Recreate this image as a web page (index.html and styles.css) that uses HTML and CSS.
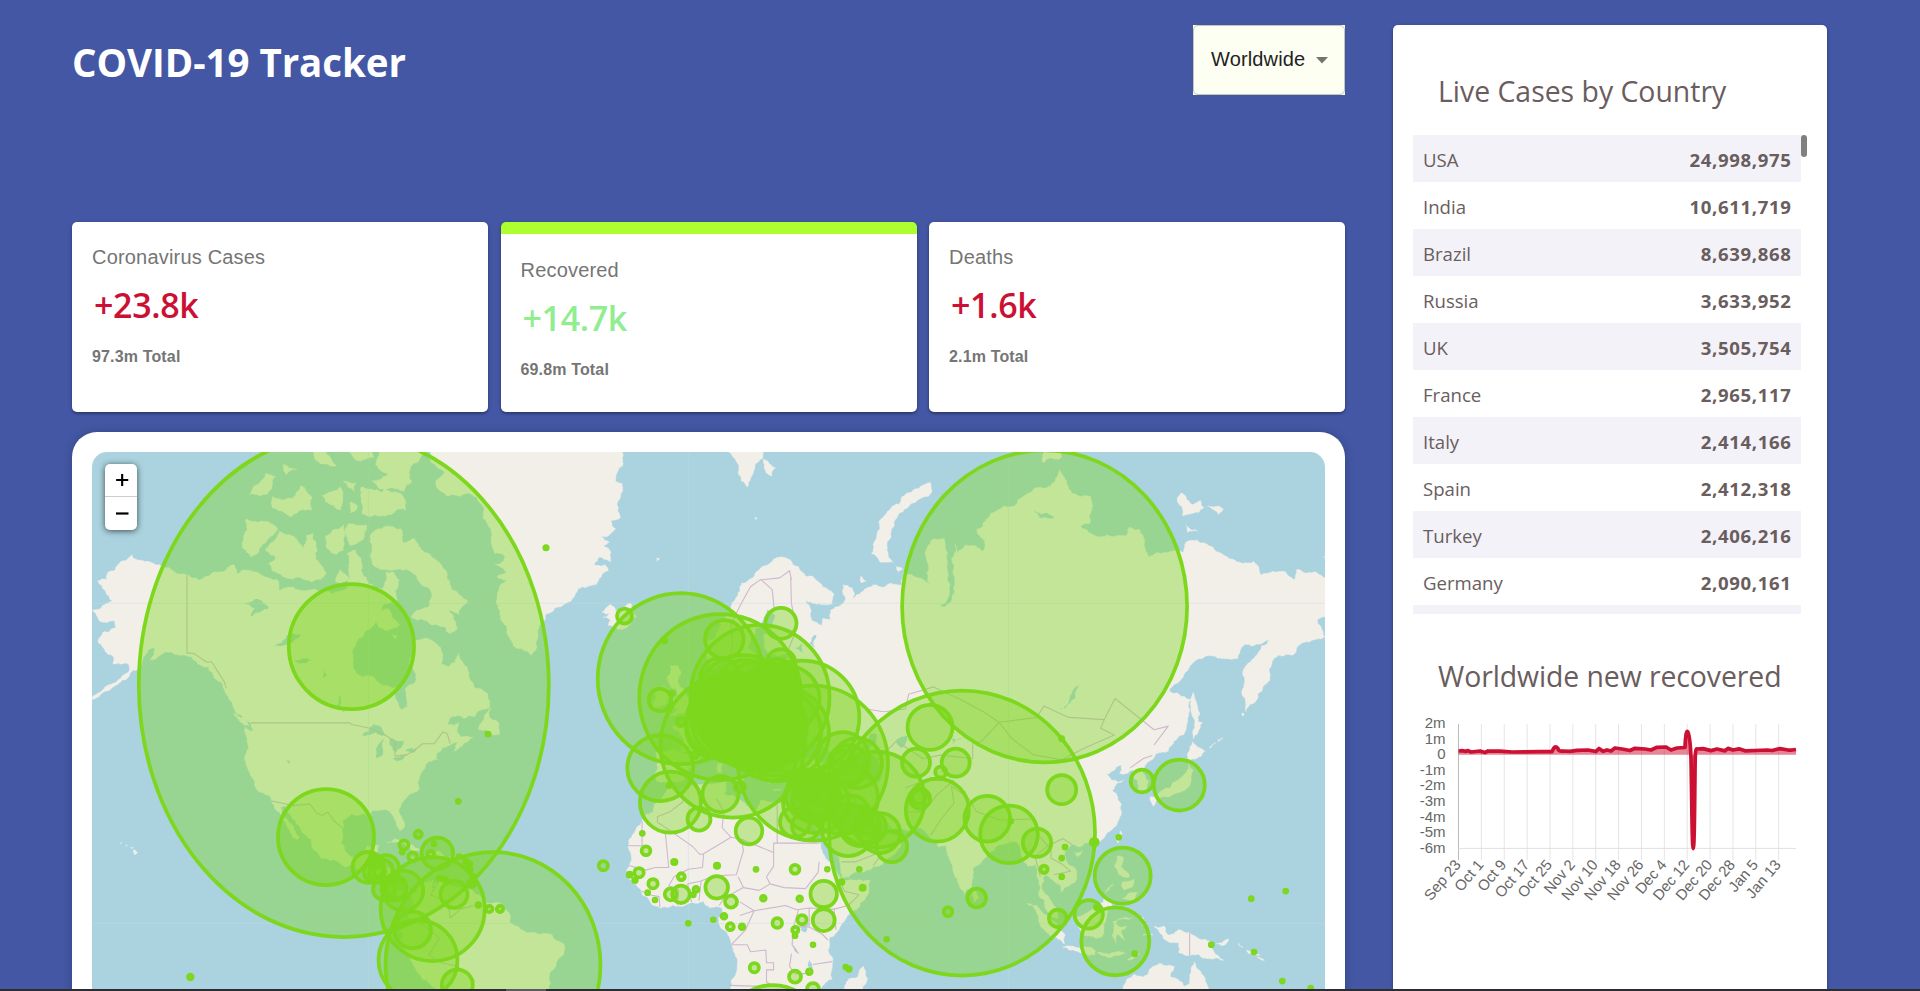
FILE: index.html
```html
<!DOCTYPE html>
<html lang="en">
<head>
<meta charset="utf-8">
<title>COVID-19 Tracker</title>
<link rel="stylesheet" href="styles.css">
</head>
<body>
<div class="app">
  <main class="app-left">
    <header class="app-header">
      <h1>COVID-19 Tracker</h1>
      <div class="select"><span class="select-box"><span>Worldwide</span><svg width="12" height="7" viewBox="0 0 12 7"><path d="M0 0h12L6 6.5z" fill="#757570"/></svg></span></div>
    </header>
    <section class="stats">
      <article class="card stat"><p class="stat-title">Coronavirus Cases</p><p class="stat-new">+23.8k</p><p class="stat-total">97.3m Total</p></article>
      <article class="card stat stat-active"><p class="stat-title">Recovered</p><p class="stat-new good">+14.7k</p><p class="stat-total">69.8m Total</p></article>
      <article class="card stat"><p class="stat-title">Deaths</p><p class="stat-new">+1.6k</p><p class="stat-total">2.1m Total</p></article>
    </section>
    <section class="map-card">
      <div class="map">
        <svg id="map" width="1233" height="600" viewBox="92 452 1233 600"></svg>
        <div class="zoom">
          <svg width="32" height="33" viewBox="0 0 32 33"><path d="M11 16.5h12.5M17.2 10.2v12.6" stroke="#000" stroke-width="2.2"/></svg>
          <svg width="32" height="33" viewBox="0 0 32 33"><path d="M11 16.5h12.5" stroke="#000" stroke-width="2.2"/></svg>
        </div>
      </div>
    </section>
  </main>
  <aside class="card app-right">
    <h2>Live Cases by Country</h2>
    <div class="table-wrap">
      <div class="table">
        <div class="row"><span>USA</span><b>24,998,975</b></div>
        <div class="row"><span>India</span><b>10,611,719</b></div>
        <div class="row"><span>Brazil</span><b>8,639,868</b></div>
        <div class="row"><span>Russia</span><b>3,633,952</b></div>
        <div class="row"><span>UK</span><b>3,505,754</b></div>
        <div class="row"><span>France</span><b>2,965,117</b></div>
        <div class="row"><span>Italy</span><b>2,414,166</b></div>
        <div class="row"><span>Spain</span><b>2,412,318</b></div>
        <div class="row"><span>Turkey</span><b>2,406,216</b></div>
        <div class="row"><span>Germany</span><b>2,090,161</b></div>
        <div class="row"></div>
      </div>
      <div class="thumb"></div>
    </div>
    <h2 class="graph-title">Worldwide new recovered</h2>
    <svg id="chart" width="394" height="200" viewBox="1413 710 394 200"></svg>
  </aside>
</div>
<div class="taskbar"><i></i></div>
<script src="map.js"></script>
</body>
</html>
```
FILE: styles.css
```css
* { box-sizing: border-box; margin: 0; }
body { background: #4357a4; font-family: "Open Sans", "Noto Sans", sans-serif; height: 991px; overflow: hidden; }
.app { display: flex; gap: 48px; padding: 25px 93px 0 72px; height: 991px; overflow: hidden; }
.app-left { width: 1273px; flex: none; }
.app-header { display: flex; justify-content: space-between; height: 197px; }
h1 { color: #fff; font-size: 38.5px; line-height: 74px; font-weight: 700; letter-spacing: -0.05px; }
.select { width: 152px; height: 70px; background: #fdfff2; }
.select-box { display: flex; align-items: center; justify-content: space-between; height: 70px; padding: 0 16px 1px 17px; border: 1px solid #c3c5b7; border-radius: 5px; font: 20px "Liberation Sans", Arial, sans-serif; letter-spacing: .15px; color: #222; }
.select-box svg { margin-top: 2px; }
.card { background: #fff; border-radius: 5px; box-shadow: 0 2px 2px rgba(0,0,0,.2), 0 1px 4px rgba(0,0,0,.2); }
.stats { display: grid; grid-template-columns: repeat(3, 1fr); gap: 12.5px; }
.stat { height: 190px; padding: 20px; font-family: "Liberation Sans", Arial, sans-serif; color: #757575; }
.stat-active { border-top: 12.5px solid #adff2f; padding-top: 20.5px; }
.stat-title { font-size: 20px; line-height: 30px; letter-spacing: .19px; }
.stat-new { font: 600 34px/44px "Open Sans", sans-serif; color: #cc1034; margin-top: 11px; padding-left: 2px; letter-spacing: -.35px; }
.good { color: #90ee90; }
.stat-total { font-size: 16px; font-weight: 700; line-height: 22px; margin-top: 19px; letter-spacing: .15px; }
.map-card { margin-top: 20px; background: #fff; border-radius: 25px; padding: 20px; height: 640px; box-shadow: 0 0 10px rgba(0,0,0,.2); }
.map { position: relative; height: 600px; border-radius: 15px; overflow: hidden; background: #aad3df; }
.map > svg { display: block; }
.zoom { position: absolute; left: 13px; top: 12px; width: 32px; height: 66px; border-radius: 5px; background: #fff; box-shadow: 0 1px 6px rgba(0,0,0,.65); display: flex; flex-direction: column; }
.zoom svg:first-child { border-bottom: 1px solid #ccc; }
.app-right { width: 434px; flex: none; height: 1100px; padding: 43px 20px 0; color: #6a5d5d; }
h2 { font-size: 28.4px; font-weight: 400; line-height: 46px; padding-left: 25px; white-space: nowrap; }
.table-wrap { display: flex; margin-top: 21px; height: 479px; overflow: hidden; }
.table { width: 388px; }
.row { height: 47px; display: flex; justify-content: space-between; align-items: center; padding: 1px 10px 0; font-size: 18.6px; }
.row:nth-child(odd) { background: #f3f2f8; }
.row b { font-weight: 700; letter-spacing: .65px; margin-right: -.65px; }
.thumb { width: 6px; height: 22px; border-radius: 4px; background: #808080; }
.graph-title { margin-top: 39px; letter-spacing: -.08px; }
#chart { display: block; margin-top: 11px; font: 15px "Liberation Sans", Arial, sans-serif; }
.taskbar { position: fixed; left: 0; right: 0; bottom: 0; height: 2px; background: #2b2d33; }
.taskbar i { display: block; width: 40px; height: 2px; margin-left: 506px; background: #5c5c60; }
```
FILE: map.js
```js
// Web Mercator projection of "lon,lat lon,lat ..." strings
const px = lon => 688.3 + lon * 3.5556;
const py = lat => 923.3 - 203.72 * Math.log(Math.tan(Math.PI / 4 + lat * Math.PI / 360));
const project = s => s.trim().split(/\s+/).map(p => {
  const [a, b] = p.split(',').map(Number);
  return [px(a), py(b)];
});
const toPath = pts => 'M' + pts.map(p => p[0].toFixed(1) + ' ' + p[1].toFixed(1)).join('L');

// Midpoint displacement gives coastlines their small irregularities
let seed = 11;
const rnd = () => (seed = (seed * 16807) % 2147483647) / 2147483647 - .5;
function rough(a, b, out) {
  const dx = b[0] - a[0], dy = b[1] - a[1], len = Math.hypot(dx, dy);
  if (len < 2.5) { out.push(b); return; }
  const k = rnd() * (len > 40 ? .08 : .34);
  const m = [a[0] + dx / 2 - dy * k, a[1] + dy / 2 + dx * k];
  rough(a, m, out);
  rough(m, b, out);
}
const coast = s => {
  const pts = project(s), out = [];
  pts.forEach((p, i) => rough(p, pts[(i + 1) % pts.length], out));
  return toPath(out) + 'Z';
};

const land = [
// Americas
`-141,69.6 -146,70.2 -149,70.5 -152,70.8 -154,70.9 -156.6,71.4 -158,70.9 -160,70.6 -163,69.8 -163.5,69.1 -166.2,68.9 -164,67.9 -162,66.8 -163.8,66.5 -167.7,65.7 -166,64.7 -161.5,64.5 -161,63.6 -164.5,63.1 -166,61.7 -164,60.5 -162,59.9 -161.8,58.7 -159,58.8 -157.5,58.7 -157.2,57.7 -161,55.9 -164.8,54.7 -168,53.2 -164,54.5 -162,55.1 -158,56.4 -155,57.9 -153.5,59.2 -151.8,60.8 -150,61.1 -151.5,59.3 -148.5,60 -145.5,60.4 -142,60 -139.5,59.6 -137,58.5 -135,58.3 -133.5,57 -131,55.5 -130,54 -128,52 -127.5,51 -124.8,49.8 -123,49 -122.5,47.5 -124.7,48.3 -124,46 -124.4,43 -124.2,40.5 -122.5,37.7 -120.6,34.6 -118.3,33.9 -117.1,32.5 -115.9,30.3 -114.2,28 -113,26.6 -112,24.8 -110,22.9 -109.5,23.4 -111,25.5 -112.7,28 -114.7,31 -113,31.2 -111,28 -109,25.8 -106,23 -105.5,20.5 -104,19 -101,17.5 -97,15.9 -94.5,16.2 -92,14.5 -89,13.3 -87.5,12.9 -85.8,11 -85.6,9.9 -83.6,8.8 -82.8,8.2 -80.5,7.4 -79.5,8.9 -78.2,8.3 -77.5,7.2 -77.3,4 -78.8,1.5 -80,.5 -80.9,-1.5 -80,-3.2 -81.3,-4.7 -79.8,-7 -78,-10.5 -76.2,-13.8 -73,-16.5 -70.3,-18.4 -70,-24 -48.5,-26 -46,-24 -41.5,-22 -39.5,-18.5 -39,-14 -37.2,-11.2 -35,-8.5 -35,-5.8 -37,-4.8 -40,-2.9 -44,-2.6 -48,-.8 -50,0 -50,1.8 -51.6,4.2 -54,5.9 -57.2,6 -60,8.3 -62,9.8 -62,10.7 -65,10.1 -68,10.6 -70,12.1 -71.5,10.8 -71,9.5 -72,9.8 -71.8,12 -74.8,11 -75.6,10.4 -76.8,8.2 -77.5,8.6 -79.5,9.6 -81.5,8.9 -83.3,10.2 -83.6,12.5 -83.2,15 -85.5,15.9 -88.5,15.9 -88.2,18 -87.4,20 -87,21.5 -90.3,21.2 -90.8,19.3 -92,18.6 -94.5,18.2 -96.3,19.5 -97.7,22 -97.4,25.5 -97.2,27.7 -94.7,29.4 -91.5,29.5 -89.3,29.1 -89,30.3 -86,30.4 -84,30 -82.8,28.5 -82,26.5 -81.1,25.2 -80.2,25.7 -80.5,28.2 -81.4,30.5 -79.5,33 -77.5,34.3 -75.7,35.3 -76,37 -74,40 -73.8,40.8 -70.5,41.7 -70.8,43 -67,44.7 -64.8,45.4 -66,43.6 -63.5,44.6 -60.5,46.3 -64,46.3 -65,48 -64.5,49 -68,48.6 -70.5,47 -66.5,50.2 -60,50.2 -56,51.7 -56,53 -58,54.8 -60,55 -61.5,56.5 -62,58 -64.5,60.3 -65.5,59 -67.5,58.3 -69.5,58.8 -69.6,61 -73.5,62.3 -78,62.4 -77.5,60 -78.5,58.7 -76.6,57 -77,55.8 -79.6,54.8 -79,52 -80.5,51.3 -82.2,53 -82.3,55.1 -87.5,56.1 -92.5,57 -94.3,58.8 -94.5,60.5 -93,62 -90.5,63.3 -88,64.2 -87,65.3 -85.8,66.4 -82,66.7 -81.3,69 -83,69.8 -85,69.8 -86,68 -88,68.2 -90.5,69.2 -92,70 -92,71 -93.5,71.8 -96,71.5 -95.5,69.8 -96,68.2 -98,67.8 -102,67.8 -108,67.9 -110,68 -115,67.9 -115.5,69 -118,69.2 -120,69.5 -122,69.8 -125,70 -127,69.6 -128,70.5 -131,69.8 -135,69.4 -137.5,69`,
// Vancouver, Newfoundland, Caribbean
`-128,50.8 -125,50 -123.5,48.5 -126,49.2`, `-59,47.7 -57.5,50.3 -55.5,51.6 -56,50 -53.5,49.2 -53,46.8 -55.5,47`,
`-84.9,21.9 -82.5,23.1 -79,22.6 -74.3,20.3 -77.5,19.9 -78.5,21 -82,22.3`, `-74.4,18.5 -72.8,19.9 -69.8,19.8 -68.5,18.6 -71.5,17.8`, `-78.3,18.4 -76.3,18.1 -77.5,17.8`, `-67.2,18.4 -65.7,18.3 -67,18`,
`-156.1,20.2 -154.9,19.5 -155.7,18.9`, `-157,21 -156,20.8 -156.5,20.6`, `-158.2,21.6 -157.7,21.3 -158.1,21.3`, `-159.8,22.1 -159.3,22 -159.6,21.9`,
// Arctic archipelago
`-117,69.9 -113,69.2 -106,68.8 -101.8,69.7 -105,71.5 -105.5,73.2 -107.5,73 -108.3,71.8 -110,72.7 -111,73 -115,73.4 -119,71.8 -116,71.2 -118,70.6`,
`-125.5,72 -123,71.2 -120.5,72 -117,73 -115.5,73.5 -120,74.2 -124.5,74.3 -124,73.5`,
`-102,73 -97,73.9 -97,71.8 -99,71.4 -102,72.2`, `-95.5,74 -90.5,73.9 -91.5,72.7 -95,72.2`, `-98,70 -95.5,69 -99,68.8`,
`-89.5,73 -85,73.8 -81,73.6 -80.5,72.5 -77,72.8 -74,71.6 -70,70.7 -68,69.8 -67,68.7 -64.5,67.5 -62,66.7 -64.5,65.2 -67.5,65.7 -65,63.5 -67,62.9 -71,64 -74,64.5 -78,65 -73.5,66 -73,68.2 -76,69 -79,70 -83,70 -88.5,70.4 -89.5,71.3`,
`-87,65.5 -84,65.8 -81,64 -85,63.2 -87,63.7`, `-83.5,62.8 -82,62.6 -82.5,62.2`,
`-92,76.6 -88,76.4 -81,76.2 -79.5,75 -85,74.6 -91.5,74.7 -92,75.8`,
`-92,81 -90,79.5 -86,79 -88,78 -84.5,77.4 -89,77 -87,76.5 -80,76.3 -77.8,77 -78,77.9 -75,78.5 -72,81 -80,82`,
`-96,80 -96,79 -92,78.2 -88.5,78.4 -89,80`, `-104.5,79.2 -99,77.9 -105,78.3`, `-103,76 -98,76.6 -97.7,75 -102,75.6`, `-117,76 -111,75.9 -109,76.7 -105.8,75.9 -106,75 -112,74.5 -117,75.2`, `-123.5,76.1 -119,77.4 -116,77.3 -117.5,76.4`, `-114,78 -110,77.7 -113,77.4`, `-97,77 -93.5,76.9 -94,76.3`, `-95,75.6 -93,75.3 -95,74.8`,
// Greenland, Iceland, Svalbard
`-73,79 -72.5,78.2 -68.5,77.5 -71,77 -68,76 -62,76.2 -58,75.4 -55.5,73.5 -54.5,71.5 -51.5,71.2 -54.5,70.5 -51.2,69.8 -53.8,69.3 -51,69 -53.5,67.8 -53.5,66 -52,64.2 -50.5,62.5 -48.5,61 -44,60 -42.6,61 -42.3,62.8 -40.5,64.5 -40,65.3 -37.5,66 -34.5,66.5 -31,68.1 -26,68.5 -22.5,69.9 -23.5,70.5 -26.5,70.5 -25,71.2 -22,70.7 -21.8,71.6 -24,72.2 -22.2,72.5 -24.5,73 -20.5,73.6 -21.8,74.2 -19,74.5 -20,75.5 -18.5,76.8 -20.5,77 -18.5,77.9 -19.5,79 -20,81 -73,81`,
`-24.3,65.5 -22,66.4 -20.5,65.7 -18,66.1 -16.2,66.5 -14.6,65 -16.5,64 -18.8,63.4 -22.5,63.9 -21.8,64.5 -23.9,64.9 -22,65.3`,
`10.5,79.2 14,77.5 16.7,76.6 18.8,78 21,78.4 21,79.5 12,80`, `21,78.3 24.5,77.8 23.5,77.3 21.5,77.7`, `22,79.3 27,80 23,80.3`, `-9,71.1 -8,71 -8.8,70.8`, `18.8,74.5 19.3,74.4 19,74.3`,
// Novaya Zemlya and Siberian islands
`51.5,71.5 53,73 56.5,75 61,76.1 68,76.9 68.5,76.3 61,75.1 57,73.3 56,72 57.5,70.7 54,70.7`, `48.5,69.4 50,68.9 48.7,68.7`, `58.5,70.3 60.4,70 59,69.8`,
`95.3,79 100,79.2 99.8,78.1 105,78.4 104.5,79.2 98,80.2`, `137.5,75.8 139,76.2 142,75.4 144,75.7 145,75.2 142,74.8 139,74.6`, `146,75.3 150.5,75.1 149,74.7`, `140,73.9 143.3,73.4 140.5,73.3`, `178.7,71.2 180,71.5 180,70.9`,
// Britain and Ireland
`-5.5,50.1 -3,51.4 -5,51.8 -4.3,53.2 -3,53.8 -3.3,54.8 -5,55.3 -6,56.7 -5,58.5 -3,58.5 -2,57.5 -3,56 -1.5,55 0,53.5 1.7,52.7 1,51.2 -1.5,50.7 -3.6,50.3`, `-10,51.7 -9.5,54.2 -7.4,55.3 -5.6,54.5 -6.2,52.3`,
// Eurasia
`-5.6,36 -6.4,37 -8.9,37 -9.4,38.8 -8.7,41 -9.2,43.1 -5,43.6 -1.8,43.4 -1.2,45.5 -2.5,47.3 -4.6,48.2 -1.5,48.7 -1.8,49.7 .2,49.6 1.6,50.6 4,51.7 5,53.2 8.3,53.8 8.7,55.5 8.2,57 10.6,57.7 10.2,56 10,54.7 11,54 14,54 18.5,54.7 19.8,54.5 21.1,55.5 21.2,57 24,57.1 24.3,58.3 23.5,59.2 28,59.6 30,60 28,60.5 23,59.9 21.4,61 21.3,62.8 24.5,65 22.3,65.8 21,64.5 17.5,62 17.2,60.7 18.8,59.7 16.5,57.5 15.8,56.2 14.2,55.4 12.9,55.5 12,57.5 11,59 10.4,59.2 7.5,58 5.5,59 5,61.5 8.5,63.3 12,65.5 13,66.8 14.5,67.8 15,68.7 17,69 20,70 22,70.4 24,71 28,71 31,70.3 33,69.4 37,68.7 41,67.5 40.5,66.4 36,66.4 33,66.8 34.8,64.5 37.5,63.9 38,64.8 40,64.7 40,65.7 43,66.3 44.2,66.9 43.5,68.5 46,68.2 46.5,66.9 49,67.8 52,68.5 54,68.3 57,68.7 60,68.5 60.5,69.7 65,69.2 68.5,68.3 67,69.7 67,71 69,72.8 72,72.8 72.7,71 73.2,69.5 73.5,68.3 72,66.5 69.5,66.3 72,66.1 74.5,67.5 75,69 74,71 75,72.4 75.5,71.5 78,72.3 83,71.7 81,73.5 87,75 95,76.1 100,76.5 104.5,77.7 107,76.5 113,76 113,74 109,73.4 106,73 110,73.8 118,73.1 123,73 124,73.7 127,73.5 129.5,71.2 133,71.5 135,71.6 139,71.6 140,72.5 146,72.3 150,71.5 153,71 159,70.8 161,69.5 168,69.8 170.5,69 171,70 176,69.8 180,69 180,65 177,64.7 179,62.5 174,61.8 170,60 166,60 163.3,58 163,56 161.5,54.8 159.8,53 156.8,51 155.7,54 156,57 160,60 163.5,62 160,61.5 156.5,61.5 154.5,59.5 150,59.5 142.5,59.2 138,56 135.3,54.7 138,54 141.2,53 140.5,50 140,48 137.5,46 135,43.5 131.5,43 129.8,41.5 127.5,39.7 129.4,37 129,35.2 126.4,34.5 126.5,37.2 125,38 125,39.6 121.3,38.8 122,40.5 119,39.2 117.7,38.6 119,37.3 122.4,37.3 119.3,35 121.8,31.7 121.8,29.5 119.5,25.8 116.5,23 113,22 110,21 108,21.6 106,20 105.8,18.8 108.5,15.5 109.3,12.3 107,10.4 105,8.7 104.8,10.3 102.5,12 100.8,13.4 100,13.3 99.3,10.5 100.3,8.3 102,6.3 103.4,4 104,1.4 103.3,1.5 100.6,4 100.3,6.3 98.5,8.2 98.6,12 97.6,16.4 95.5,15.8 94.3,17 93.5,20 91.8,22.5 89,21.8 87,21.3 85,19.7 82.3,16.7 80.2,15.5 80.2,13 79.8,10.4 77.6,8.1 76.3,10 74.5,14.5 72.8,19 72.6,21.3 70.5,20.9 69,22.3 70,22.8 67.5,24 66.5,25.3 61.5,25.2 57.3,25.7 56.3,27.1 54,26.6 51.5,27.9 50,30.1 48,30 48.5,28.2 50.2,26.5 50.8,24.8 51.3,26 51.6,24.3 54,24.2 56.2,26.2 56.5,24.5 59.8,22.4 57.8,19 55,17 52,15.6 45,12.8 43.4,12.7 42.8,16 39.1,21.3 37,25 35,28 34.9,29.4 34.3,27.8 32.6,29.9 32.5,31.2 34.3,31.4 35,33 35.8,35.5 36,36.7 32.5,36.1 30.6,36.7 28,36.7 26.3,38.2 26.2,40 29,41 31.5,41.3 35,42 38,41 41.5,41.5 39,43.8 37,45.2 39.2,47.2 35,46.2 36.5,45.3 33.6,44.4 33,46 30.7,46.3 28.7,44 27.8,42.5 28.9,41.3 26,40.7 23.5,40.3 24,38 22.8,36.5 21.3,37.5 19.5,40.5 19.4,42 15,44.5 13.7,45.6 12.3,45.3 13.6,43.5 16,42 18.5,40.1 16.9,40.4 16.2,38 15.8,40 12.5,41.6 10.3,43.5 8.8,44.4 6.5,43.1 3.2,43.1 3.1,41.8 0,39.5 -.5,37.8 -2.2,36.8`,
`8.3,41 9.7,40.8 9.3,39 8.4,39`, `12.5,38 15.5,38.2 15,36.8`, `23.6,35.4 26.2,35.2 24,35`, `32.4,35 34.3,35.6 33.5,34.7`,
// Africa and Madagascar
`-5.9,35.8 -2,35.1 5,36.8 10.8,37.3 10.2,34.3 15,32.4 19,30.3 20.2,32.6 23.2,32.2 29,30.9 32.5,31.2 32.6,29.9 35.5,24 37.3,21 38.5,18 43,12.6 43.2,11.5 51.2,11.8 50.8,9.5 47.5,4 43,-.5 39.7,-4 39.3,-7.5 40.6,-11 40.5,-15.5 36,-18.8 35,-20 12,-20 12,-17.5 13.8,-11 12.3,-6 9,-1 9.6,3.9 8.5,4.6 6,4.3 4.3,6.3 1,5.9 -2,4.7 -4.5,5.2 -7.6,4.3 -11,6.5 -13,7.9 -13.3,9.3 -16.7,12.4 -17.4,14.7 -16.2,17 -16.2,19.5 -17,21 -14.5,26 -13,27.8 -9.8,30 -9.6,31.8 -6.8,34`,
`49.3,-12 50.4,-15.5 49,-19 44,-20 44.5,-16.2 47.5,-15`, `80,9.6 81.8,7.3 80.5,6 79.8,8`,
// East and South-East Asia
`142,54.3 143.2,52 143.3,49.2 144.6,49 143,46.8 142,46 142,50`, `141.8,45.4 145.3,43.6 143,42 140.2,41.6 140.5,43.2`, `140.8,41.4 142,39.5 140.9,36 139,34.8 135.7,33.6 131,33.9 135.5,35.5 137,37 139.5,38.5`, `130,33.5 131.8,33.4 130.8,31.2`, `121.5,25.2 121.9,24.7 120.8,22 120.1,23.2`, `108.7,19.6 110.9,19.9 109.5,18.3`,
`155.7,50.8 156.4,50.5 155.9,50.2`, `149,45.8 150.3,46.2 149,45.4`, `146.5,44.3 148.3,45.2 147,44.2`,
`120.5,18.5 122.2,18.3 121.5,15.8 124,13 121,13.8 119.9,16`, `122,7 124,8.5 126.3,8.6 125.7,6 124,6.5`, `122,11.5 125.3,12.3 125,10.2 122.5,9.3`, `117.2,8.4 119.5,11.2 119.3,10.4`,
`95.3,5.6 98,5 103.7,0 106,-3.2 105.8,-5.8 102,-4 98.5,1.5`, `105.3,-6.7 108.5,-6.6 111,-6.5 114.5,-7.7 114.4,-8.7 109,-7.8`, `109,1.5 111.3,2.5 115,5 117,7 119.2,5.2 117.6,1.5 116,-4 111.5,-3.5 110,-1.5`, `119.5,.5 121,1.2 125,1.5 120.3,.3 121.5,-1 123.4,-.8 121.8,-2 122.7,-4.7 120.7,-3 120.3,-5.6 119.2,-3.3`, `115,-8.2 119,-8.3 123,-8.4 120,-9 116,-8.9`, `123.5,-10.3 127,-8.5 125,-9.2`, `127.7,1.8 128.5,.5 127.8,-.8`, `128,-3 130.7,-3.3 128,-3.5`,
`131,-.8 134,-.9 135,-3.3 138,-1.7 141,-2.6 145.5,-4.5 147.8,-6.3 147.2,-7 150.7,-10.4 147.5,-10 143.5,-8.6 141,-9.1 138,-8.3 137.8,-5.3 133.5,-4 132.7,-2.8`, `148.5,-5.7 152,-4.4 150.5,-6.2`, `154.7,-5.5 156,-6.8 155,-6.4`, `157,-7.5 160.8,-9 159,-8.3`, `160,-9.4 162,-10.5 160.8,-10`,
`122,-20 122.3,-17.3 125.5,-14.2 128,-14.9 130.5,-12.2 132.5,-11.2 136.7,-12.1 135.6,-14.9 139.5,-17.5 141,-16.8 142.3,-10.8 145.2,-15 146.2,-19 149,-21 122,-21`
];

const lakes = [
`-92,46.7 -88.5,48.8 -84.7,46.6 -88,47.2`, `-87.8,42 -87.5,44.5 -85.5,46 -86.3,42.5`, `-84,46 -80,45.5 -82.3,43.2 -83.5,44.5`, `-83.2,42 -79,42.8 -81.5,41.5`, `-79.6,43.5 -76.3,44 -77,43.3`,
`-98,53.8 -96.5,50.5 -99,52`, `-125,66.5 -121,67 -119.5,66.5 -118,66 -120.5,65.5 -123,65 -122,65.9`, `-116.5,61 -113,62.6 -109,62.8 -112.5,61.5`, `-111,59.3 -106,59.3 -109,58.8`, `-103,58 -101.7,57 -102.5,56.6`, `-113,41.5 -112,40.8 -112.3,41.6`,
`47,44.5 50,44.6 51,47 53,46.8 53,45 51,44.3 50.3,44.4 53,42 54,40.8 53.8,37 50,37.3 49,40 47.5,43`, `58.5,45.8 61.5,46.5 60,44`, `74,46 79,46.6 74.5,44.8`, `104,51.5 107,52.6 109.8,55.6 108.7,53.3 106,51.6`, `30,61 32.8,60 32,61.5`, `34.2,61.5 36,62.7 35.5,61`,
`31.8,.3 34.2,.2 33,-2.6 31.8,-2`, `29.2,-3.5 31,-8.6 29.5,-6`, `34,-10 34.6,-14 34.2,-12.5`, `97,75 101,74.8 103,74.4 99,74.4`
];

const borders = [
'-141,69.6 -141,60.3 -139,60.2 -135.5,59 -134,59 -130.5,56 -130,55', '-123,49 -95.2,49 -94.6,48.7 -89.5,48 -84.5,46.4 -82.5,45.3 -82.5,42.5 -79,42.8 -76,44.3 -74.7,45 -71.5,45 -69,47.3 -67.8,47 -67,45', '-117.1,32.5 -111,31.4 -106.5,31.8 -104.5,29.6 -103,29 -101.4,29.8 -99.5,27.5 -97.2,25.9',
'-8.7,27.3 -8.7,28.7 -5,30 -1.5,32.3 -1.7,35', '-17,21.3 -13,21.3 -13,27.7', '-8.7,27.3 -4.8,25 1.2,21.1 3.3,19 4.3,19.2 12,23.5 15,23 24,19.5 24,22 25,22 25,31.5', '-4.8,25 -6.5,25 -5.5,15.5 -9.3,15.5 -12,14.8 -16.5,16', '12,23.5 9.5,26 10,30 8,33', '25,22 36.8,22', '24,19.5 24,15.8 22,13 23,11 27,10 33,9.7 34,11 36.5,14.2 36.8,17', '4.3,19.2 4,15.5 0,15 -4,13 -5.5,10.5', '3.6,11.8 7,13.2 13.5,13.5 15.5,20 15,23', '14,13 15.5,10 10,7 8.7,5', '15.5,10 20,9.2 23,11', '14.5,2.2 18.5,3.5 22.5,4.2 27.3,5 30.5,3.8 34,4.3 41,4', '14.5,6 18.5,3.5 16,-2 12.3,-5.8', '12.3,-6 16.6,-6 17.5,-8 21.8,-7.5 22,-11 24,-11 24,-13 22,-13 22,-16.2 24,-17.5', '11.8,-17.2 18,-17.4 24,-17.5', '31,3.8 29.5,-1.3 29.2,-6 31,-8.5', '34,-1 37.6,-3 39.3,-4.7', '34,4.3 34,-1 30.5,-1', '41.5,-1.8 41,4 45,5 48,8 44,9 42.8,11', '29,-8.5 28.5,-12 30,-14 33,-14', '35,-11.5 40.5,-10.7', '3,6.4 3.6,11.8 -.2,11 .9,6', '-3,5 -2.8,9.5 -5.5,10.5', '-8,4.5 -8.2,7.5 -11,8 -13,9',
'11.5,59 12.5,61.5 12,64 14.5,66.2 17.5,68.3 20.2,69 25.7,69.2 28.5,69.9 29,69', '24.2,65.8 23.6,68 20.5,69', '28.8,69.2 29,66.5 30.5,63.5 28,60.6',
'50,51.5 55,51 61,51.5 62,54 69,55.2 77,53 83,51 87.4,49.1 98,50 100,52 107,50 117,49.6 120,53.3 127,49.8 131,47.7 135,48.4 131,44.8', '87.4,49.1 91,46 97,42.8 105,41.7 111,44 119.8,46.7 116,48 117,49.6', '124.3,40 128,42 130.5,42.6',
'80,42 80,45 82.5,45.5 87.4,49.1', '53,41.5 58.5,45.5 66,42 71,42.7 80,42', '61,35.5 66.5,37.3 74.7,37.2', '61,29.8 66.3,30 70,34 74,36.8', '68.2,24 71,28 74.7,32 74,36 79,33 81,30 88,27.8 97.3,28.2', '97.3,28.2 98.5,24 101.2,21.2 105.3,23.2 108,21.6', '101,21.2 97.5,18.5 99,13', '102,20.5 102,18 105,16.5 107.5,14.5 102.8,13.5', '141,-2.6 141,-9.1',
'44,37 48.5,30', '36,34 39,32.2 46.5,29.1', '43,17 47,17 55,20 52,16', '-78.8,1.2 -75,0 -70,-4.2 -73,-9 -69.5,-11 -65,-12 -60,-16', '-67,1.5 -64,4 -60.5,5', '-70,12 -72.5,8 -67.5,6 -67,1.5', '24,54 28,56 31,54 30,51 24,51.5', '24,50 28,48 30,46', '14,54 15,51 19,49.5 24,50', '-1.8,43.3 3,42.5', '7,49 8,47.5 13,47.5 17,48'
];

// [cx, cy, rx, ry?]
const circles = [
[343.8,685,205,252],[351.4,646.6,62.6],[326,837,48],[1044.6,606.4,142.5,156],[962,833,133,142.5],[493,965,107.5,113],
[432.7,909,52],[418,960,39.5,40],[403.3,890.6,20],[394,888,12.5],[454,894.3,13.5],[412.7,930,18.3],[457.3,985,15.5],[437.3,853.3,15.8],
[368,867.3,15.5],[374.5,872,10.5],[381,871,12],[386,868,13],[384,889,11],[396,890,10],[376,862,6],
[418.3,834.3,3.6],[404,845,4.6],[402.3,852,1.3],[412.7,856.7,4.4],[434,843.7,1.3],[430.7,854.3,3.4],[459,856.7,1.3],[466,861.5,2],[469.3,864,2],[470,870,2],[473,876,1.5],[471.7,883.5,3.5],[439.3,878.3,1.3],[443,879,1.3],[446,880,1.3],[478.3,905,1.8],[489.3,909,3.2],[500,909,3.2],
[488,734,1.2],[458.3,801.3,1.2],[190.3,977,2.3],[546,547.7,1.4],
[680.7,678.7,83,85.5],[720.3,697,81,83],[760,697,69.5,72],[801.8,717,57.5,56.5],[813,763,75,77.5],[732.5,745.5,72,72],
[660.3,768,33],[670.4,802.2,30.5],[699,819,11.5],[720.5,794,18],[749,831,13.3],[740,787,5],[669,785.5,1.6],[681,722,4],[695,755,3],
[724.3,639.3,19.3],[781,623.3,15.5],[781,663.5,14.5],[777,677,18],[773,687,24],[787.5,698,32],[720,678,20],[664,640.3,2.2],[624.5,616,7.5],[660,700,11.3],[672.3,693,1.5],
[743.4,705,50],[735.7,719,44],[716,715,24],[712,700,20],[708.7,700,14],[716,728,30],[722,722,36],[757.6,715,40],[757,720,30],[777,732,44],[762,738,33],[777,733,52,48],[741.6,734,25],[743,743,19],[752.3,745,26],[763,744,28],[775,760,21],[760,755,14],[765.7,748,17],[771,726,36],[757.6,722,46],[748,726,42],[735,740,22],[766,700,20],[770,695,30],[722,725,20],[730,705,32],[745,690,30],[755,690,28],[765,716,36],[768,722,32],[772,710,26],[776,745,22],
[843,758,26],[848,765,20],[857,763,25],[844,762,12],[841,798,37,36],[848,830,26],[851,814,18.5],[816.5,798,24],[812,801,20],[820,798,18],[817,791,14],[812,795,26],[816,803,33,30],[795,822,15],[806,826,14],[808,792,12],[876.5,799.5,48],[880,833,20],[891.7,846.7,15.5],[870,827,16],[868,823,11],[860,826,20],
[642.3,833.3,1.2],[646,850.7,4.4],[603.3,865.7,4.6],[674.3,862,2.2],[717,865.7,2.2],[756,869.3,1.2],[795,869.3,4.4],[827.3,869.3,1.1],[859.3,869.3,1.1],[841.7,882,1.8],[862.7,887.7,2.1],[629.7,874.7,2],[639,872.7,4.7],[635,880.3,1.8],[653,883.7,4.7],[681.3,876.7,3.5],[647.7,892.7,1.2],[655,900,1.1],[670.7,894.3,6],[681,894.3,8.7],[696,889.3,2.5],[693.3,894.7,1.3],[716.7,887.3,11.3],[731,901.7,6],[763.3,898.3,2.4],[799.7,898.7,2.4],[823.7,894,13.2],[823.7,920,11],[724,916.3,2.4],[713.3,919.7,1.1],[688.3,923.3,1.2],[730.3,926.7,3.5],[742,926.7,2.4],[777.3,923,4.8],[802,919.7,4.6],[795.3,930,3.1],[795,935.7,1.2],[813,944.7,1.1],[754.3,967.7,4.6],[795,976.7,6],[809.3,971.7,2.4],[813,989,6],[886.7,939.3,1.1],[845.7,967,1.2],[849,969,1.8],[773,1032,47],
[930,727.3,22.5],[916,762.7,14],[955.7,762.7,14],[940.7,772,5.5],[937.3,810,31.5],[920,798.7,10],[919,797,7],[987.3,818.7,22.8],[1009,834.3,28.8],[1037,842.7,14.2],[1061.7,789.7,14.5],[1061.7,738.7,1.2],[1010.7,821,1.2],[1094.3,842.3,3.5],[1065,847,1.2],[1061.7,858,1.2],[1061.7,876.7,1.2],[1044,869.3,3.7],[976.7,898,9.3],[948,911.7,4.4],[1057.7,918.3,8.8],[1088.7,914.3,14.2],[1096.7,907.3,1.8],[1115.3,941.3,34],[1134.7,953.7,1.2],[1122.7,875.7,28],[1142,781,11.3],[1179.3,785,25.5],[1118.7,837.3,1.2],[1251.3,898.7,1.2],[1285.7,891,1.2],[1211.3,944.7,1.2],[1254,952,1.2],[1282.3,981,1.2],[1310.7,988,1.2]
].map(c => c[2] < 1.5 ? [c[0], c[1], c[2] + .3] : c);

const group = (attrs, paths) => `<g ${attrs}>` + paths.map(d => `<path d="${d}"/>`).join('') + '</g>';
document.getElementById('map').innerHTML =
  group('fill="#f2efe9" stroke="#f2efe9" stroke-width=".4" stroke-linejoin="round"', land.map(coast)) +
  group('fill="#aad3df"', lakes.map(coast)) +
  group('fill="none" stroke="#cdb9cc" stroke-width="1.1" stroke-linejoin="round"', borders.map(s => toPath(project(s)))) +
  '<path d="M368.3 452v600M688.3 452v600M1008.3 452v600M92 603.3h1233M92 923.3h1233" stroke="#c5dbe0" stroke-opacity=".45"/>' +
  '<g fill="#7dd71d" fill-opacity=".4" stroke="#7dd71d" stroke-width="3.75">' +
  circles.map(c => `<ellipse cx="${c[0]}" cy="${c[1]}" rx="${c[2]}" ry="${c[3] || c[2]}"/>`).join('') + '</g>';

// Recovered chart
const X0 = 1458.5, STEP = 22.87;
const dates = ['Sep 23','Oct 1','Oct 9','Oct 17','Oct 25','Nov 2','Nov 10','Nov 18','Nov 26','Dec 4','Dec 12','Dec 20','Dec 28','Jan 5','Jan 13'];
let out = '';
dates.forEach((d, i) => {
  const x = X0 + i * STEP;
  out += `<path d="M${x} 724V860" stroke="${i ? '#e5e5e5' : '#bbb'}"/>` +
    `<text transform="translate(${x + 3} 865) rotate(-50)" text-anchor="end" fill="#666" font-size="15">${d}</text>`;
});
['2m','1m','0','-1m','-2m','-3m','-4m','-5m','-6m'].forEach((t, i) => {
  out += `<text x="1445.5" y="${728 + i * 15.6}" text-anchor="end" fill="#666">${t}</text>`;
});
out += `<path d="M${X0} 848.4H1796" stroke="#e0e0e0"/>`;
const line = 'M1458.5 751L1462 750.7L1466 751.3L1468 750.6L1471 752L1480 751L1485 752.5L1488 751L1500 751.2L1512 752L1525 751.8L1540 751.6L1552 751.6Q1555 744 1558 748.5Q1558 751.5 1563 751L1570 751.4L1577 750.4L1588 750L1596 751.5L1599 748.5L1603 751.3L1607 750L1611 751L1615 748L1622 749L1630 750.5L1635 748.3L1645 749L1651 750L1657 747.3L1666 747L1671 750L1677 748L1685 747.5Q1685.7 731 1687.5 731.5Q1690 734 1691 758C1691.8 790 1692 848.5 1693.2 848.5C1694.6 848.5 1694.6 790 1695.2 758Q1695.5 748 1697 749L1703 748.6L1711 750.6L1717 749L1725 750.8L1728 748.4L1733 750L1739 748.8L1745 750.8L1755 750.5L1767 750L1772 750.5L1780 748.6L1788 750L1792 750L1796 749.5';
out += `<path d="${line}V754.8H1458.5Z" fill="#cc1034" fill-opacity=".5"/><path d="${line}" fill="none" stroke="#cc1034" stroke-width="3.75" stroke-linejoin="round"/>`;
document.getElementById('chart').innerHTML = out;
```
